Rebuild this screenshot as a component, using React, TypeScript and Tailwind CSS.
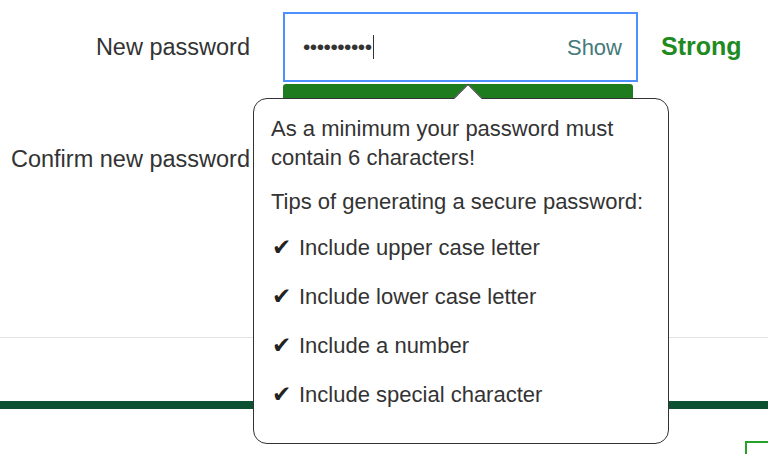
import React from 'react';

const tips = [
  'Include upper case letter',
  'Include lower case letter',
  'Include a number',
  'Include special character',
];

function PasswordHint() {
  return (
    <div className="absolute left-[253px] top-[98px] w-[416px] h-[346px] rounded-[14px] border-[1.5px] border-[#333] bg-white pl-[17px] pt-[15px] text-[22px] text-[#333]">
      {/* Arrow */}
      <div className="absolute left-[204px] top-[-11px] w-[20px] h-[20px] rotate-45 border-l-[1.5px] border-t-[1.5px] border-[#333] bg-white"></div>

      <p className="relative leading-[29px]">
        As a minimum your password must
        <br />
        contain 6 characters!
      </p>
      <p className="mt-[15px] leading-[29px]">Tips of generating a secure password:</p>
      <ul className="mt-[17px] flex flex-col gap-[20px]">
        {tips.map((tip) => (
          <li key={tip} className="flex items-center leading-[29px]">
            <span className="w-[28px] pl-[1px] font-['DejaVu_Sans',sans-serif] text-[23px] leading-[29px] text-[#222]">✔</span>
            {tip}
          </li>
        ))}
      </ul>
    </div>
  );
}

export default function App() {
  return (
    <div className="relative w-[768px] h-[454px] overflow-hidden bg-white font-['Liberation_Sans',Arial,sans-serif] text-[#333]">
      <div className="pt-[12px]">
        {/* New password */}
        <div className="flex items-start">
          <label className="w-[250px] h-[70px] pt-[2px] flex items-center justify-end text-[23.5px]">New password</label>
          <div className="ml-[33px]">
            <div className="w-[355px] h-[70px] border-2 border-[#4d90fe] flex items-center pl-[18px] pr-[14px]">
              <span className="text-[21px] tracking-[-0.5px]">••••••••••</span>
              <span className="w-[1.5px] h-[24px] bg-[#333] ml-[1px]"></span>
              <span className="ml-auto text-[22px] text-[#46797b]">Show</span>
            </div>
            <div className="mt-[2px] w-[350px] h-[14px] rounded-t-[3px] bg-[#1e7b1e]"></div>
          </div>
          <div className="ml-[23px] h-[70px] flex items-center text-[25px] font-bold text-[#1f8a1f]">Strong</div>
        </div>

        {/* Confirm new password */}
        <div className="mt-[27px] flex items-center">
          <label className="w-[250px] flex justify-end text-[23.5px]">Confirm new password</label>
          <div className="ml-[33px] w-[355px] h-[70px] border border-[#ccc]"></div>
        </div>
      </div>

      <div className="mt-[142px] h-px bg-[#e2e2e2]"></div>
      <div className="mt-[63px] h-[8px] bg-[#0b5132]"></div>
      <div className="mt-[32px] ml-[745px] w-[40px] h-[30px] border-2 border-[#27a027]"></div>

      <PasswordHint />
    </div>
  );
}
